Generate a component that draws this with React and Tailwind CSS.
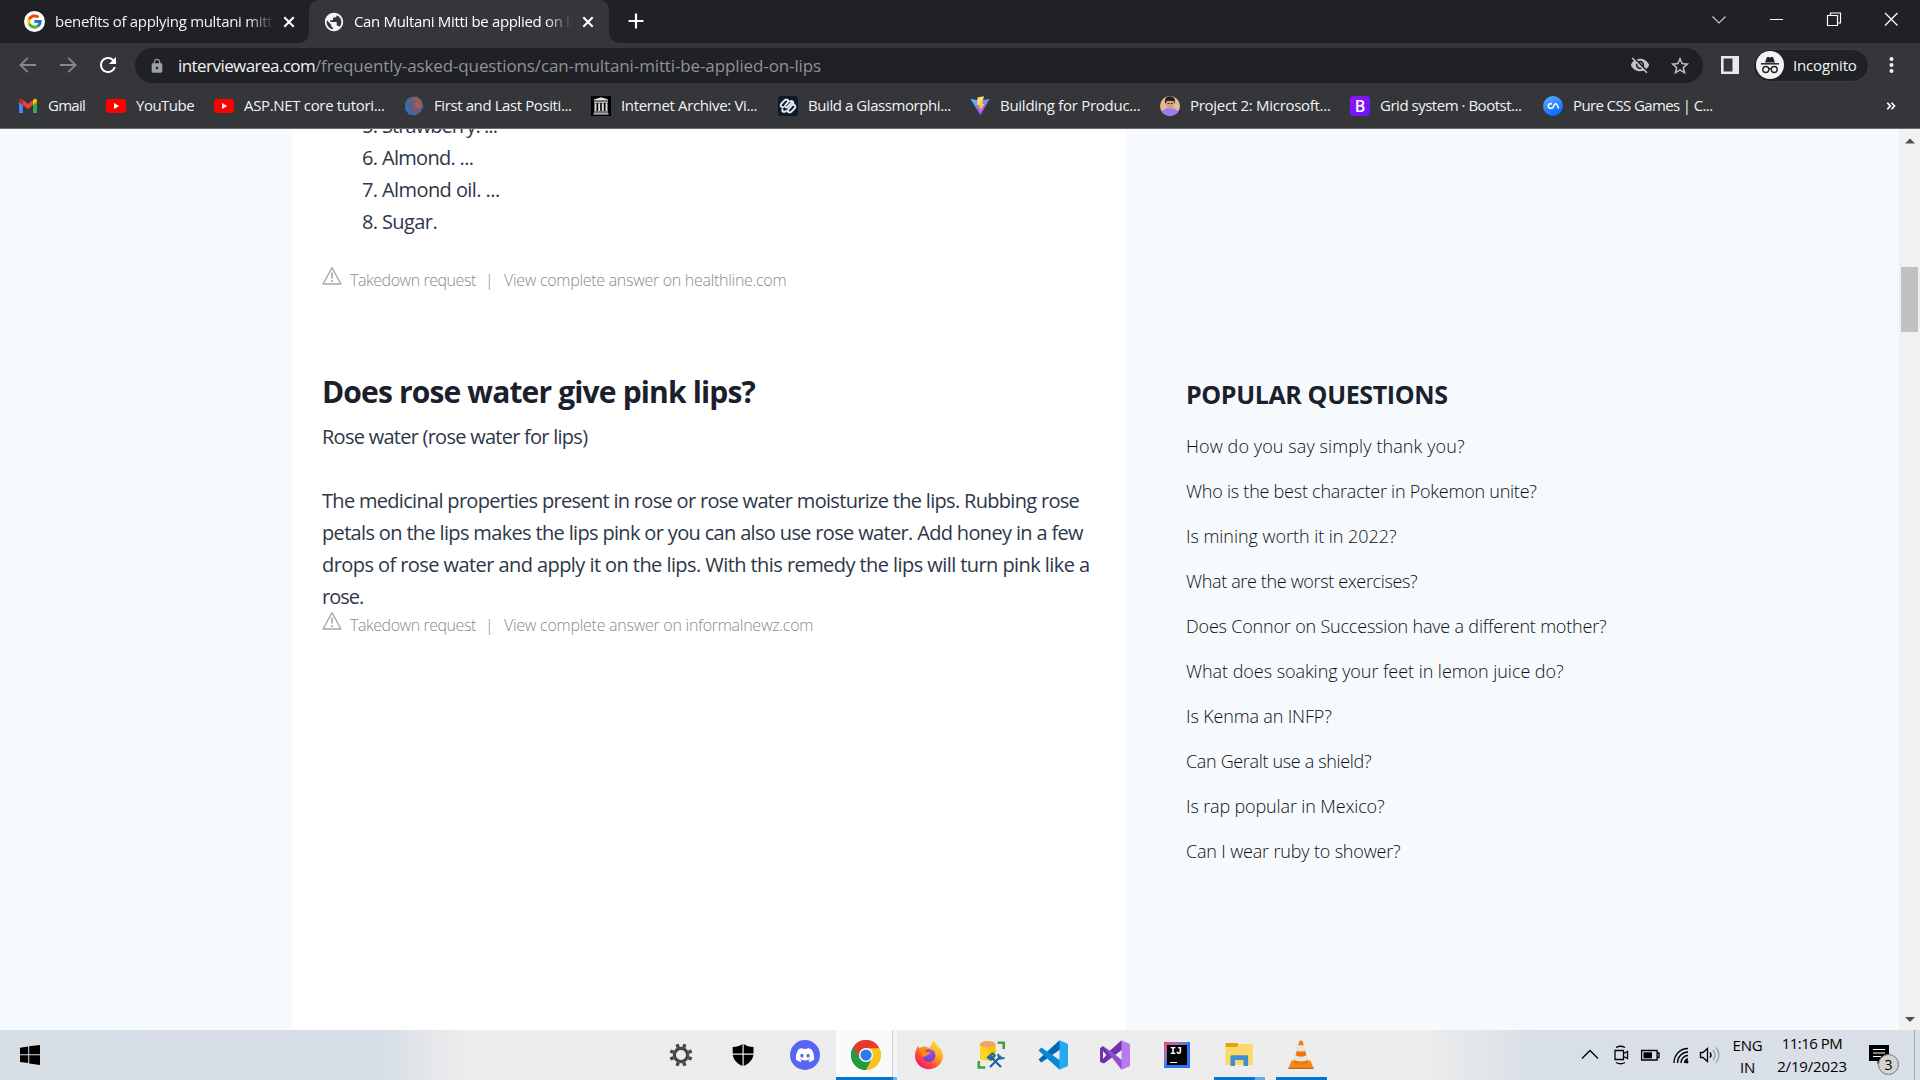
import { FcGoogle } from 'react-icons/fc';
import { FaDiscord } from 'react-icons/fa';
import { MdPublic, MdVisibilityOff, MdStarBorder, MdRefresh, MdLock } from 'react-icons/md';

/* ---------- bookmark icons ---------- */

const GmailIcon = () => (
  <svg className="h-5 w-5" viewBox="0 0 20 20">
    <path d="M1 17V5l4 3v9z" fill="#4285f4" />
    <path d="M15 17V8l4-3v12z" fill="#34a853" />
    <path d="M5 9V4l5 4 5-4v5l-5 4z" fill="#ea4335" />
    <path d="M1 6V4.5C1 3 3 2.400 4 3.200L5 4v5z" fill="#c5221f" />
    <path d="M19 6V4.500C19 3 17 2.400 16 3.200L15 4v5z" fill="#fbbc04" />
  </svg>
);

const YouTubeIcon = () => (
  <svg className="h-5 w-5" viewBox="0 0 20 20">
    <rect x="0" y="3" width="20" height="14" rx="3" fill="#f00" />
    <path d="M8 7l5.200 3L8 13z" fill="#fff" />
  </svg>
);

const SphereIcon = () => (
  <svg className="h-5 w-5" viewBox="0 0 20 20">
    <path d="M7 1l6-.5 5 4 1.500 6-3 5.500-5 3.500-6-1-4-5L1 7l2.500-4z" fill="#5d5f80" />
    <path d="M2 8l4 2 1 5 4 4-6-.5-4-5z" fill="#2f6fb5" />
    <path d="M9 1.500l4 0 4 4-3 1-4-2z" fill="#a3584f" />
    <circle cx="14" cy="9" r="3.500" fill="#a65d58" />
    <circle cx="9" cy="8" r="2.500" fill="#775a77" />
    <circle cx="5" cy="5" r="2" fill="#3f6ca5" />
    <circle cx="11" cy="14" r="2.500" fill="#80565f" />
    <circle cx="15.500" cy="14" r="1.800" fill="#4c6798" />
  </svg>
);

const ArchiveIcon = () => (
  <svg className="h-5 w-5" viewBox="0 0 20 20">
    <rect width="20" height="20" fill="#000" />
    <path d="M10 1.300L17 3.600v1H3v-1zM3 5.500h14v1.300H3zM2.500 17.200h15v1.300h-15zM3 15.500h14v1H3z" fill="#e4e4e4" />
    <path d="M4.500 7.300v7.700M8.200 7.300v7.700M11.800 7.300v7.700M15.500 7.300v7.700" stroke="#ddd" strokeWidth="2" />
  </svg>
);

const KnotIcon = () => (
  <svg className="h-5 w-5" viewBox="0 0 20 20">
    <rect width="20" height="20" rx="3" fill="#0e1a2b" />
    <g fill="none" stroke="#e9edf2" strokeWidth="1.900" strokeLinecap="round" strokeLinejoin="round">
      <path d="M5.200 11.200C2.500 11.500 2 9 3.500 7.500l3.300-3.300C8.800 2.500 11.300 4.500 9.800 6.500L7.300 9.200c-1 1.500.8 3 2.200 1.800l3.700-4" />
      <path d="M14.800 8.800c2.700-.3 3.200 2.200 1.700 3.700l-3.300 3.300c-2 1.700-4.500-.3-3-2.300l4.300-4.800c2-2.200-.5-4.800-2.500-3.200" />
      <path d="M4.300 13.500c-.3 2.300 2 3.200 3.700 1.500" />
    </g>
  </svg>
);

const ViteIcon = () => (
  <svg className="h-5 w-5" viewBox="0 0 20 20">
    <defs>
      <linearGradient id="viteBody" x1="0" y1="0" x2=".6" y2="1">
        <stop offset="0" stopColor="#41d1ff" />
        <stop offset="1" stopColor="#bd34fe" />
      </linearGradient>
      <linearGradient id="viteBolt" x1="0" y1="0" x2="0" y2="1">
        <stop offset="0" stopColor="#ffea83" />
        <stop offset="1" stopColor="#ffa800" />
      </linearGradient>
    </defs>
    <path d="M.5 3L10 4.600 19.500 3 10.500 19.300z" fill="url(#viteBody)" />
    <path d="M14 .3L7.500 1.600 7 9.500l2.500-.4-.8 3.500 2-.5-1 5 4.800-9.500-2.600.5z" fill="url(#viteBolt)" />
  </svg>
);

const PortraitIcon = () => (
  <svg className="h-5 w-5" viewBox="0 0 20 20">
    <defs>
      <clipPath id="portraitClip"><circle cx="10" cy="10" r="10" /></clipPath>
    </defs>
    <g clipPath="url(#portraitClip)">
      <rect width="20" height="20" fill="#e2bd8f" />
      <path d="M1 20c0-6 4-8 9-8s9 2 9 8z" fill="#9b78f5" />
      <ellipse cx="10" cy="8.300" rx="3.800" ry="5" fill="#d29c85" />
      <path d="M5.200 8C4 1 8 .3 10 .3s6 .7 4.800 7.700L13.500 5 7 4.800z" fill="#241b1e" />
      <path d="M7.500 7.500h2M10.800 7.500h2" stroke="#4a3030" strokeWidth="1" />
    </g>
  </svg>
);

const BootstrapIcon = () => (
  <span className="flex h-5 w-5 items-center justify-center rounded-sm bg-linear-to-br from-[#9114ff] to-[#6a10f2] text-base leading-none font-semibold text-white">B</span>
);

const CodingIcon = () => (
  <svg className="h-5 w-5" viewBox="0 0 20 20">
    <defs>
      <linearGradient id="codingBlue" x1="0" y1="0" x2=".5" y2="1">
        <stop offset="0" stopColor="#62b0ff" />
        <stop offset="1" stopColor="#0a6cff" />
      </linearGradient>
    </defs>
    <circle cx="10" cy="10" r="10" fill="url(#codingBlue)" />
    <path d="M9 7.800H7.500a2.200 2.200 0 0 0 0 4.500h1c1.500 0 1.700-1 2.200-2.400.5-1.500 1-2.100 2-2.100s1.300.6 1.700 1.600l1.200 3.100" fill="none" stroke="#fff" strokeWidth="1.500" />
  </svg>
);

const bookmarks = [
  { label: 'Gmail', Icon: GmailIcon, box: 'w-[88px]', track: 'tracking-[-0.72px]' },
  { label: 'YouTube', Icon: YouTubeIcon, box: 'w-[108px]', track: 'tracking-[-0.5px]' },
  { label: 'ASP.NET core tutori...', Icon: YouTubeIcon, box: 'w-[190px]', track: 'tracking-[-0.33px]' },
  { label: 'First and Last Positi...', Icon: SphereIcon, box: 'w-[187px]', track: 'tracking-[-0.4px]' },
  { label: 'Internet Archive: Vi...', Icon: ArchiveIcon, box: 'w-[187px]', track: 'tracking-[-0.35px]' },
  { label: 'Build a Glassmorphi...', Icon: KnotIcon, box: 'w-[192px]', track: 'tracking-[-0.43px]' },
  { label: 'Building for Produc...', Icon: ViteIcon, box: 'w-[190px]', track: 'tracking-[-0.27px]' },
  { label: 'Project 2: Microsoft...', Icon: PortraitIcon, box: 'w-[190px]', track: 'tracking-[-0.29px]' },
  { label: 'Grid system · Bootst...', Icon: BootstrapIcon, box: 'w-[193px]', track: 'tracking-[-0.48px]' },
  { label: 'Pure CSS Games | C...', Icon: CodingIcon, box: 'w-[190px]', track: 'tracking-[-0.62px]' },
];

/* ---------- browser chrome ---------- */

const CloseX = () => (
  <svg className="h-5 w-5 shrink-0" viewBox="0 0 20 20">
    <path d="M5.300 5.300l9.400 9.400M14.700 5.300l-9.400 9.400" stroke="#fff" strokeWidth="2.100" />
  </svg>
);

const TabFoot = ({ flip }) => (
  <svg className={flip ? 'h-2.5 w-2.5 self-end -scale-x-100' : 'h-2.5 w-2.5 self-end'} viewBox="0 0 10 10">
    <path d="M10 0v10H0A10 10 0 0 0 10 0z" fill="#35363a" />
  </svg>
);

function TabStrip() {
  return (
    <div className="flex h-[43px] justify-between bg-[#202124]">
      <div className="flex">
        <div className="flex w-[299px] items-center pl-6">
          <FcGoogle className="h-[21px] w-[21px] shrink-0 rounded-full bg-white p-0.5" />
          <span className="ml-2.5 w-[221px] overflow-hidden mask-r-from-88% pb-px text-[15px] leading-5 tracking-[-0.3px] whitespace-nowrap text-[#f1f3f4]">benefits of applying multani mitti</span>
          <span className="ml-[5px]"><CloseX /></span>
        </div>
        <TabFoot />
        <div className="flex w-[300px] items-center rounded-t-[10px] bg-[#35363a] pl-3.5">
          <MdPublic className="h-[22px] w-[22px] shrink-0 text-[#f1f3f4]" />
          <span className="ml-[9px] w-[218px] overflow-hidden mask-r-from-88% pb-px text-[15px] leading-5 tracking-[-0.34px] whitespace-nowrap text-white">Can Multani Mitti be applied on lips</span>
          <span className="ml-[6px]"><CloseX /></span>
        </div>
        <TabFoot flip />
        <svg className="mt-[11px] ml-[7px] h-5 w-5" viewBox="0 0 20 20">
          <path d="M10 2.500v15M2.500 10h15" stroke="#fff" strokeWidth="2.200" />
        </svg>
      </div>
      <div className="flex h-[37px] items-center">
        <svg className="h-5 w-[57px]" viewBox="0 0 57 20">
          <path d="M22.500 7.500l6.500 6.500 6.500-6.500" fill="none" stroke="#c8c9cb" strokeWidth="1.200" />
        </svg>
        <svg className="h-5 w-[58px]" viewBox="0 0 58 20">
          <path d="M23 10.500h13" stroke="#fff" strokeWidth="1" />
        </svg>
        <svg className="h-5 w-[57px]" viewBox="0 0 57 20">
          <path d="M22.500 6.500h10v10h-10zM25.500 6.500v-2.500h10v10h-3" fill="none" stroke="#fff" strokeWidth="1.200" />
        </svg>
        <svg className="h-5 w-[58px]" viewBox="0 0 58 20">
          <path d="M23 4l12.500 12.500M35.500 4L23 16.500" stroke="#fff" strokeWidth="1.300" />
        </svg>
      </div>
    </div>
  );
}

function Toolbar() {
  return (
    <div className="flex h-11 items-center bg-[#35363a]">
      <svg className="ml-[18px] h-5 w-5" viewBox="0 0 20 20">
        <path d="M18 10H3M9.700 2.800L2.500 10l7.200 7.200" fill="none" stroke="#87888b" strokeWidth="1.800" />
      </svg>
      <svg className="ml-5 h-5 w-5" viewBox="0 0 20 20">
        <path d="M2 10h15M10.300 2.800l7.200 7.200-7.200 7.200" fill="none" stroke="#87888b" strokeWidth="1.800" />
      </svg>
      <MdRefresh className="ml-[18px] h-6 w-6 text-white" />
      <div className="ml-[15px] flex h-[35px] w-[1568px] items-center rounded-full bg-[#202124] pt-px pl-3.5">
        <MdLock className="h-4 w-4 text-[#9aa0a6]" />
        <span className="ml-[13px] w-[137px] text-[17px] leading-6 tracking-[-0.56px] whitespace-nowrap text-[#f1f3f4]">interviewarea.com</span>
        <span className="text-[17px] leading-6 tracking-[-0.12px] whitespace-nowrap text-[#8f9296]">/frequently-asked-questions/can-multani-mitti-be-applied-on-lips</span>
        <div className="mr-3 ml-auto flex gap-[19px]">
          <MdVisibilityOff className="h-5 w-5 text-[#c3c4c6]" />
          <MdStarBorder className="h-[22px] w-[22px] text-[#c3c4c6]" />
        </div>
      </div>
      <svg className="ml-[18px] h-[18px] w-[18px]" viewBox="0 0 18 18">
        <path d="M0 0h18v18H0zM2.600 2.600v12.800h8.900V2.600z" fill="#e8eaed" fillRule="evenodd" />
      </svg>
      <div className="ml-3.5 flex h-[33px] w-[116px] items-center rounded-full border border-[#3c3d41] bg-[#202124] pl-[2px]">
        <svg className="h-7 w-7 shrink-0" viewBox="0 0 28 28">
          <circle cx="14" cy="14" r="14" fill="#f1f3f4" />
          <path d="M9 11.500l2-5.500h1.500l1.500.6 1.500-.6H17l2 5.500z" fill="#202124" />
          <path d="M5 12.800h18" stroke="#202124" strokeWidth="1.500" />
          <g fill="none" stroke="#202124" strokeWidth="1.400">
            <circle cx="9.800" cy="18.500" r="3" />
            <circle cx="18.200" cy="18.500" r="3" />
            <path d="M12.800 18c.8-.6 1.600-.6 2.400 0" />
          </g>
        </svg>
        <span className="ml-[9px] pb-px text-[15px] leading-5 tracking-[-0.15px] text-[#f1f3f4]">Incognito</span>
      </div>
      <svg className="ml-[11px] h-5 w-5" viewBox="0 0 20 20">
        <g fill="#f1f3f4">
          <circle cx="11.500" cy="4" r="2" />
          <circle cx="11.500" cy="10" r="2" />
          <circle cx="11.500" cy="16" r="2" />
        </g>
      </svg>
    </div>
  );
}

function BookmarkBar() {
  return (
    <div className="flex h-[42px] items-center border-b border-[#6a6b6f] bg-[#35363a] pb-[3px] pl-[18px]">
      {bookmarks.map(({ label, Icon, box, track }) => (
        <div key={label} className={`flex shrink-0 items-center ${box}`}>
          <Icon />
          <span className={`ml-2.5 pb-0.5 text-[15px] leading-5 whitespace-nowrap text-[#f1f3f4] ${track}`}>{label}</span>
        </div>
      ))}
      <svg className="mr-[24px] ml-auto h-2.5 w-2.5" viewBox="0 0 10 10">
        <path d="M1.300 1.700L4.300 5l-3 3.300M5.500 1.700L8.500 5l-3 3.300" fill="none" stroke="#fff" strokeWidth="1.700" />
      </svg>
    </div>
  );
}

/* ---------- page ---------- */

const Warning = () => (
  <svg className="-mt-2 h-5 w-5 shrink-0" viewBox="0 0 20 20">
    <path d="M10 1.600L18.900 18H1.100z" fill="none" stroke="#a6a6a6" strokeWidth="1.300" strokeLinejoin="round" />
    <path d="M10 6.500v6M10 14v2" stroke="#a6a6a6" strokeWidth="1.600" />
  </svg>
);

const Source = ({ children, track }) => (
  <div className="flex h-6 items-center text-base leading-6 font-light whitespace-nowrap text-[#8a8a8a]">
    <Warning />
    <span className="ml-2 w-[135px] tracking-[-0.45px]">Takedown request</span>
    <span className="w-[19px]">|</span>
    <span className={track}>{children}</span>
  </div>
);

const ingredients = [
  { n: '5.', name: 'Strawberry. ...', track: 'tracking-[-0.93px]' },
  { n: '6.', name: 'Almond. ...', track: 'tracking-[-0.7px]' },
  { n: '7.', name: 'Almond oil. ...', track: 'tracking-[-0.58px]' },
  { n: '8.', name: 'Sugar.', track: 'tracking-[-0.6px]' },
];

const questions = [
  { q: 'How do you say simply thank you?', track: 'tracking-[0.1px]' },
  { q: 'Who is the best character in Pokemon unite?', track: 'tracking-[-0.24px]' },
  { q: 'Is mining worth it in 2022?', track: 'tracking-[-0.04px]' },
  { q: 'What are the worst exercises?', track: 'tracking-[-0.35px]' },
  { q: 'Does Connor on Succession have a different mother?', track: 'tracking-[-0.19px]' },
  { q: 'What does soaking your feet in lemon juice do?', track: 'tracking-[-0.05px]' },
  { q: 'Is Kenma an INFP?', track: 'tracking-[-0.15px]' },
  { q: 'Can Geralt use a shield?', track: 'tracking-[-0.34px]' },
  { q: 'Is rap popular in Mexico?', track: 'tracking-[-0.14px]' },
  { q: 'Can I wear ruby to shower?', track: 'tracking-[-0.17px]' },
];

function Page() {
  return (
    <div className="flex h-[901px] overflow-hidden bg-[#f7fafc]">
      <main className="ml-[292px] w-[834px] shrink-0 bg-white pl-[30px] text-[#2d3748]">
        <ol className="-mt-[19px] pl-10 text-xl leading-8">
          {ingredients.map(({ n, name, track }) => (
            <li key={n} className="flex whitespace-nowrap">
              <span className="w-5 tracking-[-0.8px]">{n}</span>
              <span className={track}>{name}</span>
            </li>
          ))}
        </ol>
        <div className="mt-[30px]"><Source track="tracking-[-0.29px]">View complete answer on healthline.com</Source></div>
        <h2 className="mt-[79px] text-[30px] leading-[42px] font-bold tracking-[-0.85px] whitespace-nowrap text-[#1a202c]">Does rose water give pink lips?</h2>
        <div className="mt-2 text-xl leading-8 whitespace-nowrap">
          <p className="mb-8 tracking-[-0.74px]">Rose water (rose water for lips)</p>
          <p className="tracking-[-0.69px]">The medicinal properties present in rose or rose water moisturize the lips. Rubbing rose</p>
          <p className="tracking-[-0.66px]">petals on the lips makes the lips pink or you can also use rose water. Add honey in a few</p>
          <p className="tracking-[-0.57px]">drops of rose water and apply it on the lips. With this remedy the lips will turn pink like a</p>
          <p className="tracking-[-1px]">rose.</p>
        </div>
        <Source track="tracking-[-0.26px]">View complete answer on informalnewz.com</Source>
      </main>
      <aside className="ml-[60px] pt-[250px] whitespace-nowrap text-[#1a202c]">
        <h3 className="text-[25px] leading-[30px] font-bold tracking-[-0.37px]">POPULAR QUESTIONS</h3>
        <ul className="mt-[15px] text-lg font-light text-[#0b0f17]">
          {questions.map(({ q, track }) => (
            <li key={q} className={`h-[45px] leading-[45px] ${track}`}>{q}</li>
          ))}
        </ul>
      </aside>
      <div className="ml-auto flex w-[21px] shrink-0 flex-col items-center bg-[#f1f1f1]">
        <svg className="h-6 w-2.5" viewBox="0 0 10 24"><path d="M0 14.500L5 9.500l5 5z" fill="#505050" /></svg>
        <div className="mt-[114px] h-[65px] w-[17px] bg-[#c1c1c1]" />
        <svg className="mt-auto h-6 w-2.5" viewBox="0 0 10 24"><path d="M0 11l5 5 5-5z" fill="#505050" /></svg>
      </div>
    </div>
  );
}

/* ---------- taskbar ---------- */

const Gear = () => (
  <svg className="h-[30px] w-[30px]" viewBox="0 0 30 30">
    <circle cx="15" cy="15" r="6.600" fill="none" stroke="#454545" strokeWidth="3.200" />
    <g stroke="#454545" strokeWidth="3.400">
      <path d="M12.200 7.500l-1.100-3.200M17.800 7.500l1.100-3.200M12.200 22.500l-1.100 3.200M17.800 22.500l1.100 3.200M7.500 12.200l-3.200-1.100M7.500 17.800l-3.200 1.100M22.500 12.200l3.200-1.100M22.500 17.800l3.200 1.100" />
    </g>
  </svg>
);

const Shield = () => (
  <svg className="h-[30px] w-[30px]" viewBox="0 0 30 30">
    <path d="M14.500 4v9.500H4.700V7C8.500 7 12 6 14.500 4zM15.700 4c2.500 2 6 3 9.800 3v6.500h-9.800zM4.700 14.800h9.800V26C9 23.500 5.500 20 4.700 14.800zM15.700 14.800h9.800c-.8 5.200-4.300 8.700-9.800 11.200z" fill="#000" />
  </svg>
);

const Discord = () => (
  <span className="flex h-[30px] w-[30px] items-center justify-center rounded-full bg-[#5865f2]">
    <FaDiscord className="h-5 w-5 text-white" />
  </span>
);

const Chrome = () => (
  <svg className="h-[30px] w-[30px]" viewBox="0 0 48 48">
    <path d="M24 24L3.200 12A24 24 0 0 1 44.800 12z" fill="#e33b2e" />
    <path d="M24 24L44.800 12A24 24 0 0 1 24 48z" fill="#fcc31e" />
    <path d="M24 24L24 48A24 24 0 0 1 3.200 12z" fill="#249a41" />
    <path d="M24 13h20.800a24 24 0 0 0-41.600-1l10.500 18z" fill="#e33b2e" />
    <path d="M33.500 29.500L24 48A24 24 0 0 0 45.300 13H24z" fill="#fcc31e" />
    <path d="M14.500 29.500L3.200 12A24 24 0 0 0 24 48l9.500-18.500z" fill="#249a41" />
    <circle cx="24" cy="24" r="11.300" fill="#fff" />
    <circle cx="24" cy="24" r="9" fill="#2a7de9" />
  </svg>
);

const Firefox = () => (
  <svg className="h-[30px] w-[30px]" viewBox="0 0 30 30">
    <defs>
      <linearGradient id="foxFire" x1=".85" y1=".1" x2=".2" y2=".95">
        <stop offset="0" stopColor="#ffe33c" />
        <stop offset=".4" stopColor="#ff9a1f" />
        <stop offset=".7" stopColor="#ff4a3c" />
        <stop offset="1" stopColor="#e81a70" />
      </linearGradient>
      <radialGradient id="foxCore" cx=".6" cy=".3" r=".8">
        <stop offset="0" stopColor="#a34de8" />
        <stop offset="1" stopColor="#5a3fd0" />
      </radialGradient>
    </defs>
    <path d="M19 .5c3 1.800 4.200 4.200 4.500 6 2-.2 5.500 4.500 5.500 9A14 13.500 0 0 1 1 16C1 11.500 2.500 8 4.500 5.800c.2 1.200.5 2 1 2.500C7 7 9 6.300 11 6.500c3 .2 3.500 1.500 5 1C17.500 6 17.500 3 19 .5z" fill="url(#foxFire)" />
    <circle cx="15" cy="15.500" r="6.300" fill="url(#foxCore)" />
    <path d="M5 9.500c2-2 5-2 7.500-.7-1 .9-1.500 1.800-1 2.800 1.300.8 3.500.4 5 .9-.7 1.700-3 1.800-4.200 3.300-1.300 1.700-3.500 1-4.200 0C7 14 7 12 5 9.500z" fill="#ff8a16" />
    <path d="M17 8.500c4.500.5 6.500 5 5 9 2.500-1.500 4-5 1.500-8.500-2-2.500-5-2-6.500-.5z" fill="#ffbd2e" />
  </svg>
);

const DataTools = () => (
  <svg className="h-[30px] w-[30px]" viewBox="0 0 30 30">
    <path d="M4 4.500h15.500V19c-3 2-12 2-15.500 0z" fill="#fdd32a" />
    <path d="M12 5h7.500v14c-2 1.300-5 1.500-7.500 1.400z" fill="#f7c600" />
    <ellipse cx="11.800" cy="4.300" rx="7.800" ry="3.200" fill="#efa65a" />
    <path d="M21.500 2.700h6.200v6.200M2.800 21v6.500h6.500" fill="none" stroke="#43a047" strokeWidth="2.600" />
    <path d="M14 27l11-11M14.500 16.500L25 27" stroke="#1565b0" strokeWidth="2.200" />
    <path d="M12 17.500l4.500-4 2 2-3.500 4zM22 14l1.500 4.500 5-.5" fill="none" stroke="#1565b0" strokeWidth="2.200" />
  </svg>
);

const VsCode = () => (
  <svg className="h-[30px] w-[30px]" viewBox="0 0 30 30">
    <path d="M.5 19.500L21.500.3 23 9 3.300 22.500z" fill="#0069b4" />
    <path d="M.5 10.500L21.500 29.700 23 21 3.300 7.500z" fill="#0787d4" />
    <path d="M21.500.2L29 3.500Q30 4 30 5v20q0 1-1 1.500l-7.500 3.300z" fill="#27a9f1" />
  </svg>
);

const VisualStudio = () => (
  <svg className="h-[30px] w-[30px]" viewBox="0 0 30 30">
    <path d="M0 8l3-2 5.500 6L21.500.3 23 9 4 23.500 0 22zM3 11v8l3.500-4z" fill="#6c33a8" fillRule="evenodd" />
    <path d="M3 6L21.500 29.700 23 21 12 12z" fill="#9250cf" />
    <path d="M21.500.2L29 3.500Q30 4 30 5v20q0 1-1 1.500l-7.500 3.300z" fill="#b77bf0" />
  </svg>
);

const IntelliJ = () => (
  <span className="flex h-[26px] w-[26px] items-center justify-center bg-linear-to-br from-[#fe315d] via-[#2a75f5] to-[#2a75f5]">
    <span className="flex h-5 w-5 flex-col items-start justify-between bg-black py-[2px] pl-[3px]">
      <span className="font-['Liberation_Mono',monospace] text-[10px] leading-2.5 font-bold text-white">IJ</span>
      <span className="h-px w-[7px] bg-white" />
    </span>
  </span>
);

const Explorer = () => (
  <svg className="h-[30px] w-[30px]" viewBox="0 0 30 30">
    <path d="M1.500 4q0-1 1-1h10.500l2 1.500v3H1.500z" fill="#e5a50a" />
    <path d="M1.500 7H13l2-3h13q.7 0 .7.700V25H1.500z" fill="#ffd968" />
    <path d="M6.500 26V16.500q0-1.300 1.300-1.300h15q1.300 0 1.300 1.300V26h-4.600v-6h-8.500v6z" fill="#3d8fd4" />
  </svg>
);

const Vlc = () => (
  <svg className="h-[30px] w-[30px]" viewBox="0 0 30 30">
    <path d="M5.500 20.500h19l3 7.500q0 1-1 1h-23q-1 0-1-1z" fill="#f28a1c" />
    <path d="M13.500.8h3L22.500 23c-3 2.500-12 2.500-15 0z" fill="#f0780c" />
    <path d="M12.200 5.200h5.600l1.500 5.200c-2 1.500-6.600 1.500-8.600 0zM9.400 15.300c3 1.900 8.200 1.900 11.200 0l1.200 4.500c-3.500 2-10.100 2-13.600 0z" fill="#e6e6e6" />
    <path d="M2.500 28.300h25" stroke="#c2650a" strokeWidth="1.200" />
  </svg>
);

const apps = [
  { id: 'settings', Icon: Gear },
  { id: 'security', Icon: Shield },
  { id: 'discord', Icon: Discord },
  { id: 'chrome', Icon: Chrome, active: true },
  { id: 'firefox', Icon: Firefox },
  { id: 'datatools', Icon: DataTools },
  { id: 'vscode', Icon: VsCode },
  { id: 'visualstudio', Icon: VisualStudio },
  { id: 'intellij', Icon: IntelliJ },
  { id: 'explorer', Icon: Explorer, stacked: true },
  { id: 'vlc', Icon: Vlc, running: true },
];

function AppButton({ Icon, active, stacked, running }) {
  return (
    <div className="flex w-[62px] flex-col items-center">
      {active ? (
        <div className="flex h-[47px] w-full">
          <div className="flex w-[57px] items-center justify-center border-r border-[#cfcfcf] bg-[#fafafa] pt-[3px] pl-[3px]"><Icon /></div>
          <div className="w-1 bg-[#f5f5f5]" />
        </div>
      ) : (
        <div className="flex h-[47px] items-center pt-[3px]"><Icon /></div>
      )}
      {active && <div className="flex h-[3px] w-full"><div className="w-[57px] bg-[#0078d7]" /><div className="w-1 bg-[#76b1e4]" /></div>}
      {stacked && <div className="flex h-[3px] w-[51px]"><div className="w-[41px] bg-[#0078d7]" /><div className="w-2.5 bg-[#66ade8]" /></div>}
      {running && <div className="h-[3px] w-[51px] bg-[#0078d7]" />}
    </div>
  );
}

function Taskbar() {
  return (
    <div className="flex h-[50px] bg-[linear-gradient(90deg,#d6dee6_0px,#d7dee7_380px,#ececec_460px,#ededed_1420px,#d8dfe7_1540px,#d8dfe7_1920px)] text-black">
      <svg className="mt-[15px] ml-5 h-5 w-5" viewBox="0 0 20 20">
        <path d="M0 2.700l8.200-1.200V9.200H0zM9.200 1.300L20 0v9.200H9.200zM0 10.200h8.200V18L0 17zM9.200 10.200H20V20l-10.800-1.500z" fill="#000" />
      </svg>
      <div className="ml-[610px] flex">
        {apps.map((app) => <AppButton key={app.id} {...app} />)}
      </div>
      <div className="ml-auto flex items-center">
        <svg className="h-5 w-5" viewBox="0 0 20 20"><path d="M2 13.500L10 5.500l8 8" fill="none" stroke="#000" strokeWidth="1.300" /></svg>
        <svg className="ml-[11px] h-5 w-5" viewBox="0 0 20 20">
          <path d="M4 5.500h8.500v9H4zM12.500 8.500l4-2v7l-4-2M5 2.500c3-1.700 6-1.700 9 0M5 17.500c3 1.700 6 1.700 9 0" fill="none" stroke="#000" strokeWidth="1.300" />
        </svg>
        <svg className="ml-[9px] h-5 w-5" viewBox="0 0 20 20">
          <path d="M1.600 5.500h15.500v9.500H1.600zM17 8h2v4.500h-2" fill="none" stroke="#000" strokeWidth="1.300" />
          <path d="M3.500 7.300H12v6H3.500z" fill="#000" />
        </svg>
        <svg className="ml-[11px] h-5 w-5" viewBox="0 0 20 20">
          <g fill="none" stroke="#000" strokeWidth="1.300">
            <path d="M3 18C3 10 9 3.500 17 3.500M6.500 18c0-6 4.500-11 10.500-11M10 18c0-4 3-7.500 7-7.500M13.500 18c0-2 1.500-4 3.500-4" />
          </g>
          <circle cx="15.800" cy="16.800" r="1.700" fill="#000" />
        </svg>
        <svg className="ml-[8px] h-5 w-[22px]" viewBox="0 0 22 20">
          <path d="M1.500 7.500H4l4.500-4v13L4 12.500H1.500zM11 7.500c1.300 1.500 1.300 3.500 0 5" fill="none" stroke="#000" strokeWidth="1.300" />
          <path d="M14 5c2.500 3 2.500 7 0 10M17 2.500c4 4.500 4 10.500 0 15" fill="none" stroke="#999ea5" strokeWidth="1.300" />
        </svg>
        <div className="ml-[5px] flex w-[43px] flex-col items-center pt-px text-[15px] leading-[22px]">
          <span className="tracking-[-0.2px]">ENG</span>
          <span className="tracking-[-0.3px]">IN</span>
        </div>
        <div className="ml-[5px] flex w-[76px] flex-col items-center text-[15px] leading-[23px] whitespace-nowrap">
          <span className="tracking-[-0.5px]">11:16 PM</span>
          <span className="tracking-[-0.15px]">2/19/2023</span>
        </div>
        <div className="relative ml-[19px] h-5 w-5">
          <svg className="h-5 w-5" viewBox="0 0 20 20">
            <path d="M0 0h20v16h-8l-3.500 3.500V16H0z" fill="#000" />
            <path d="M4 4.500h12M4 8h12M4 11.500h8" stroke="#fff" strokeWidth="1.100" />
          </svg>
          <span className="absolute top-[9px] left-[9px] flex h-[21px] w-[21px] items-center justify-center rounded-full border border-[#777] bg-[#d3d3d3] text-sm leading-none">3</span>
        </div>
        <div className="ml-[25px] h-[50px] w-1.5 border-l border-[#a5abb3]" />
      </div>
    </div>
  );
}

export default function App() {
  return (
    <div className="h-[1080px] w-[1920px] overflow-hidden font-['Open_Sans','Noto_Sans',sans-serif]">
      <TabStrip />
      <Toolbar />
      <BookmarkBar />
      <Page />
      <Taskbar />
    </div>
  );
}
